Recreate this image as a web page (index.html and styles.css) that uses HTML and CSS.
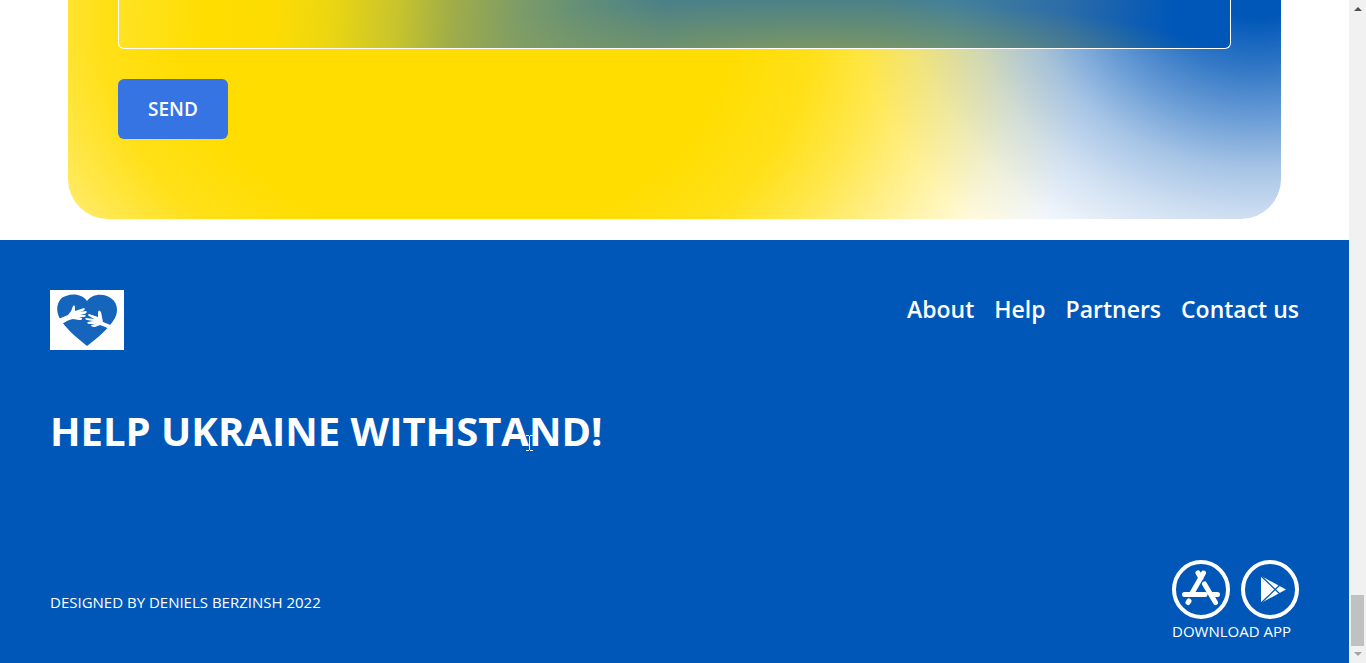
FILE: index.html
```html
<!DOCTYPE html>
<html lang="en">
<head>
<meta charset="utf-8">
<title>Help Ukraine Withstand</title>
<link rel="stylesheet" href="styles.css">
</head>
<body>
<div class="viewport">
  <div class="page">
    <main class="contact">
      <form class="card">
        <textarea class="message" aria-label="Message"></textarea>
        <button class="send" type="button">SEND</button>
      </form>
    </main>
    <footer class="footer">
      <div class="footer-top">
        <a class="logo" href="#" aria-label="Home">
          <svg viewBox="0 0 74 60" width="74" height="60" aria-hidden="true">
            <rect width="74" height="60" fill="#fff"/>
            <path d="M37 56C29 49 15 39 9 27C5 18 8 8 16 6C24 3 33 5 37 11C42 4 52 3 59 7C67 11 69 20 65 28C59 39 46 49 37 56Z" fill="#1565bd"/>
            <path d="M6 30L18 25Q22 21 23 16Q25 14 25 18L25 21L34 18Q36 19 33 21L29 22L36 21Q38 22 35 24L30 25L35 25Q37 26 34 27L29 27L32 28Q33 30 29 30L23 29Q17 30 11 35Z" fill="#fff"/>
            <path d="M63 36L53 32L51 22Q49 19 48 22L48 27L39 24Q37 25 39 26L44 29L36 28Q34 29 37 30L43 31L38 32Q36 33 39 34L45 34L41 35Q41 37 45 37L50 35Q56 37 59 39Z" fill="#fff"/>
          </svg>
        </a>
        <nav class="nav">
          <a href="#">About</a>
          <a href="#">Help</a>
          <a href="#">Partners</a>
          <a href="#">Contact us</a>
        </nav>
      </div>
      <h2 class="slogan">HELP UKRAINE WITHSTAND!
        <svg class="cursor" viewBox="0 0 7 16" width="7" height="16" aria-hidden="true"><path d="M0 .5H3M4 .5H7M3.500 1V15M0 15.500H3M4 15.500H7" stroke="#fff" fill="none"/></svg>
      </h2>
      <div class="footer-bottom">
        <p class="credit">DESIGNED BY DENIELS BERZINSH 2022</p>
        <div class="download">
          <div class="stores">
            <a href="#" aria-label="App Store">
              <svg viewBox="0 0 58 59" width="58" height="59" fill="none" stroke="#fff" aria-hidden="true">
                <ellipse cx="29" cy="29.500" rx="27" ry="27.500" stroke-width="4"/>
                <path d="M31.500 13L19.500 34M26 13L29 18M32.500 24L43.500 42.500M12.500 34.500H33M41 34.500H45.500M17 41L16 42.500" stroke-width="5" stroke-linecap="round"/>
              </svg>
            </a>
            <a href="#" aria-label="Google Play">
              <svg viewBox="0 0 58 59" width="58" height="59" fill="none" aria-hidden="true">
                <ellipse cx="29" cy="29.500" rx="27" ry="27.500" stroke="#fff" stroke-width="4"/>
                <path d="M20 16L45 29.500L20 43Z" fill="#fff"/>
                <path d="M20 16L40 35M20 43L40 24" stroke="#0057b8" stroke-width="1.200"/>
              </svg>
            </a>
          </div>
          <span>DOWNLOAD APP</span>
        </div>
      </div>
    </footer>
  </div>
  <div class="scrollbar" aria-hidden="true">
    <i class="arrow up"></i>
    <i class="thumb"></i>
    <i class="arrow down"></i>
  </div>
</div>
</body>
</html>
```
FILE: styles.css
```css
* { box-sizing: border-box; }
body { margin: 0; font-family: "Open Sans", "Noto Sans", sans-serif; color: #fff; background: #fff; }
a { color: inherit; text-decoration: none; }
.viewport { display: flex; min-height: 100vh; }
.page { flex: 1; display: flex; flex-direction: column; }
.contact { padding: 0 68px 21px; }
.card {
  display: flex; flex-direction: column; align-items: flex-start; gap: 30px;
  padding: 0 50px 80px; border-radius: 0 0 40px 40px;
  background:
    radial-gradient(330px 290px at 98% -40px, #0057b8 20%, rgba(0,87,184,.8) 38%, rgba(0,87,184,.58) 55%, rgba(0,87,184,.35) 72%, rgba(0,87,184,.18) 90%, rgba(0,87,184,.06) 108%, rgba(0,87,184,0) 125%),
    radial-gradient(570px 450px at 32% 20px, #ffdd00 48%, rgba(255,221,0,.9) 63%, rgba(255,221,0,.7) 74%, rgba(255,221,0,.4) 88%, rgba(255,221,0,.15) 100%, rgba(255,221,0,0) 112%),
    #fff;
}
.message {
  display: block; width: 100%; height: 49px; resize: none; outline: 0;
  border: 1px solid #fff; border-top: 0; border-radius: 0 0 6px 6px;
  background:
    radial-gradient(420px 70px at 62% 68px, rgba(150,164,80,.85), rgba(150,164,80,0)),
    linear-gradient(94deg, #ffe324, #ffdd00 8%, #fddc02 14%, #ecd612 19%, #c8c42c 25%, #a0ad48 30%, #7c9c68 36%, #628e78 42%, #4a8088 49%, #4a8088 68%, #44809a 75%, #2c6ca8 85%, #0c5cb4 92%, #0057b8 95%);
}
.send {
  padding: 0 30px; height: 60px; border: 0; border-radius: 6px;
  background: #3673e3; color: #fff; font: 600 19px "Open Sans", sans-serif;
}
.footer { flex: 1; padding: 50px 50px 20px; background: #0057b8; display: flex; flex-direction: column; }
.footer-top { display: flex; justify-content: space-between; align-items: flex-start; }
.logo, .logo svg, .stores a, .stores svg { display: block; }
.nav { display: flex; gap: 20px; font-size: 23px; font-weight: 600; line-height: 38px; }
.slogan { position: relative; margin: 53px 0 0; align-self: flex-start; font-size: 40px; line-height: 56px; font-weight: 700; }
.cursor { position: absolute; left: 476px; top: 32px; }
.footer-bottom { margin-top: auto; display: flex; justify-content: space-between; align-items: center; font-size: 15px; line-height: 24px; }
.credit { margin: 0; }
.stores { display: flex; gap: 11px; }
.scrollbar { width: 17px; display: flex; flex-direction: column; align-items: center; padding: 7px 0; background: #f1f1f1; }
.arrow { border: 4px solid transparent; }
.up { border-top: 0; border-bottom-color: #505050; }
.down { border-bottom: 0; border-top-color: #a3a3a3; }
.thumb { width: 13px; height: 51px; margin: auto 0 6px; background: #c1c1c1; }
```
